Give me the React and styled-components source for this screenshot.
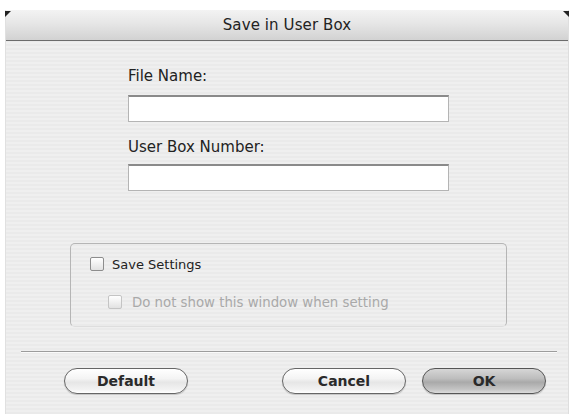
import React from "react";
import styled, { createGlobalStyle } from "styled-components";

const Global = createGlobalStyle`
  html, body { margin: 0; padding: 0; background: #ffffff; }
  body { font-family: "DejaVu Sans", "Liberation Sans", sans-serif; overflow: hidden; }
  #root { width: 573px; height: 414px; }
`;

const Page = styled.div`
  width: 573px;
  height: 414px;
  padding: 10px 4px 0 5px;
  box-sizing: border-box;
  background: #ffffff;
`;

const Window = styled.div`
  width: 564px;
  height: 404px;
  display: flex;
  flex-direction: column;
  background: repeating-linear-gradient(180deg, #efefef 0 2px, #eaeaea 2px 4px);
  border-left: 1px solid #e0e0e0;
  border-right: 1px solid #dedede;
  box-sizing: border-box;
`;

const TitleBar = styled.div`
  position: relative;
  height: 30px;
  flex: none;
  display: flex;
  align-items: center;
  justify-content: center;
  background: linear-gradient(180deg, #f3f3f3 0%, #e6e6e6 45%, #d2d2d2 100%);
  border-bottom: 1px solid #6c6c6c;
  color: #222;
  font-size: 15px;
  letter-spacing: 0.1px;
  &::before, &::after {
    content: "";
    position: absolute;
    top: 1px;
    width: 0;
    height: 0;
    border-style: solid;
  }
  &::before {
    left: -1px;
    border-width: 6px 6px 0 0;
    border-color: #222 transparent transparent transparent;
  }
  &::after {
    right: -1px;
    border-width: 0 6px 6px 0;
    border-color: transparent #222 transparent transparent;
  }
`;

const Body = styled.div`
  flex: 1;
  display: flex;
  flex-direction: column;
`;

const Fields = styled.div`
  margin: 26px 0 0 122px;
  display: flex;
  flex-direction: column;
`;

const Label = styled.div`
  height: 18px;
  line-height: 18px;
  font-size: 15px;
  color: #222;
  margin-top: ${(p) => p.$top || 0}px;
`;

const TextInput = styled.div`
  width: 321px;
  height: 27px;
  margin-top: ${(p) => p.$top}px;
  box-sizing: border-box;
  background: #ffffff;
  border: 1px solid #b4b4b4;
  border-top: 2px solid #8a8a8a;
`;

const Group = styled.div`
  margin: 52px 0 0 64px;
  width: 437px;
  height: 84px;
  box-sizing: border-box;
  border: 1px solid #b5b5b5;
  border-bottom-color: #dedede;
  border-radius: 5px;
  padding: 11px 0 0 19px;
  display: flex;
  flex-direction: column;
  gap: 20px;
`;

const CheckRow = styled.div`
  height: 18px;
  display: flex;
  align-items: center;
  margin-left: ${(p) => p.$indent || 0}px;
  gap: 8px;
  font-size: ${(p) => (p.$disabled ? 13.3 : 13)}px;
  color: ${(p) => (p.$disabled ? "#a9a9a9" : "#222")};
`;

const Box = styled.span`
  width: 14px;
  height: 14px;
  box-sizing: border-box;
  border-radius: 2px;
  border: 1px solid ${(p) => (p.$disabled ? "#c4c4c4" : "#8d8d8d")};
  background: linear-gradient(180deg, #ffffff 0%, #eeeeee 60%, #e2e2e2 100%);
  margin-right: ${(p) => (p.$disabled ? 2 : 0)}px;
`;

const Separator = styled.div`
  margin: 24px 0 0 15px;
  width: 536px;
  height: 1px;
  background: #9c9c9c;
  box-shadow: 0 1px 0 #fafafa;
`;

const ButtonRow = styled.div`
  margin: 16px 0 0 58px;
  display: flex;
  align-items: center;
`;

const Button = styled.div`
  width: 124px;
  height: 26px;
  box-sizing: border-box;
  border-radius: 13px;
  border: 1px solid ${(p) => (p.$primary ? "#555" : "#666")};
  margin-left: ${(p) => p.$left || 0}px;
  display: flex;
  align-items: center;
  justify-content: center;
  font-size: 14px;
  font-weight: bold;
  color: #2a2a2a;
  background: ${(p) =>
    p.$primary
      ? "linear-gradient(180deg, #d6d6d6 0%, #bdbdbd 40%, #a9a9a9 55%, #c4c4c4 85%, #dcdcdc 100%)"
      : "linear-gradient(180deg, #ffffff 0%, #f4f4f4 40%, #e6e6e6 55%, #f2f2f2 85%, #ffffff 100%)"};
  box-shadow: 0 1px 1px rgba(0, 0, 0, 0.18);
`;

export default function App() {
  return (
    <>
      <Global />
      <Page>
        <Window>
          <TitleBar>Save in User Box</TitleBar>
          <Body>
            <Fields>
              <Label>File Name:</Label>
              <TextInput $top={10} />
              <Label $top={16}>User Box Number:</Label>
              <TextInput $top={8} />
            </Fields>
            <Group>
              <CheckRow>
                <Box />
                Save Settings
              </CheckRow>
              <CheckRow $indent={18} $disabled>
                <Box $disabled />
                Do not show this window when setting
              </CheckRow>
            </Group>
            <Separator />
            <ButtonRow>
              <Button>Default</Button>
              <Button $left={94}>Cancel</Button>
              <Button $left={16} $primary>
                OK
              </Button>
            </ButtonRow>
          </Body>
        </Window>
      </Page>
    </>
  );
}
